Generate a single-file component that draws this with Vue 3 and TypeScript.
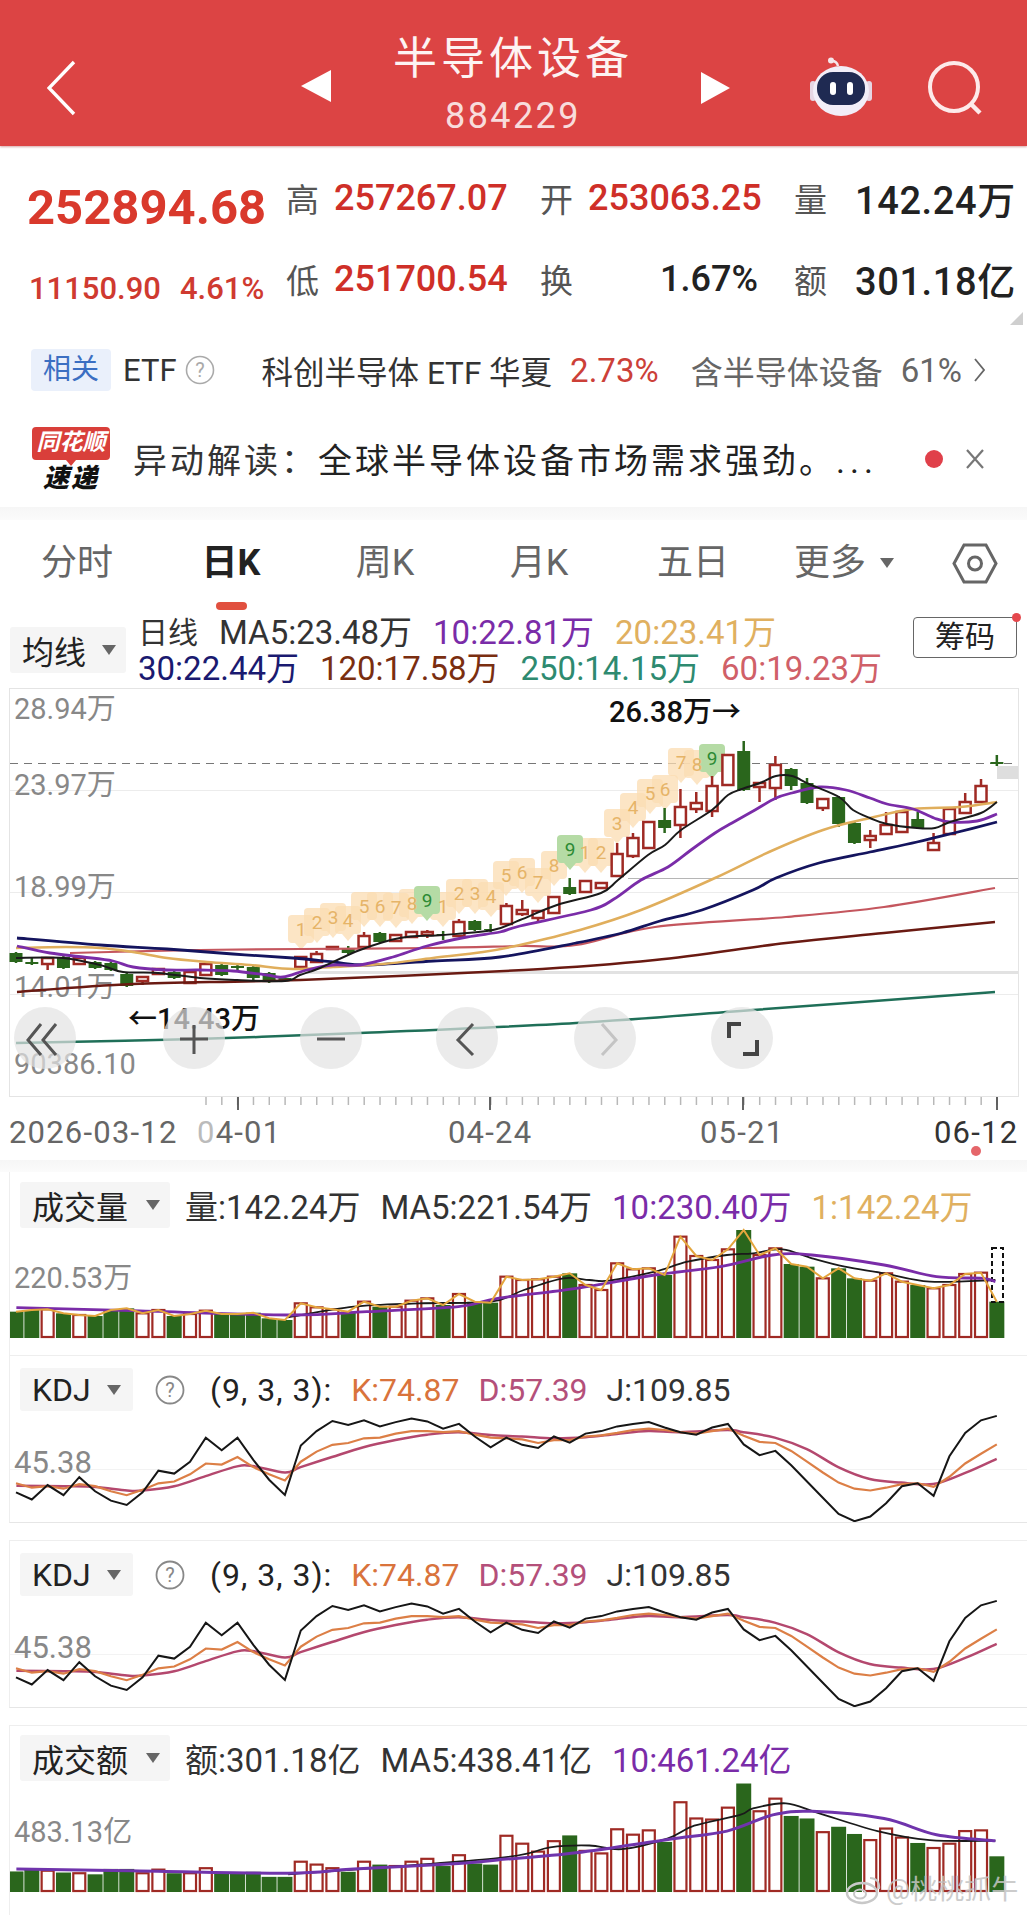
<script setup lang="ts">
type Pt = [number, number]

const STEP = 15.82
const xAt = (i: number) => 16 + STEP * i

// [bodyTop, bodyBottom, wickTop, wickBottom, up]
const candles: [number, number, number, number, number][] = [
  [953, 962, 952, 963, 0], [962, 964, 957, 965, 0], [958, 964, 957, 970, 1], [957, 968, 956, 969, 0],
  [958, 964, 956, 965, 1], [962, 968, 961, 969, 0], [963, 970, 962, 971, 0], [974, 986, 973, 987, 0],
  [977, 981, 977, 985, 1], [969, 974, 968, 975, 1], [972, 978, 971, 979, 0], [972, 983, 971, 984, 1],
  [964, 975, 963, 976, 1], [965, 975, 964, 976, 0], [966, 968, 965, 972, 0], [967, 978, 966, 980, 0],
  [973, 982, 972, 983, 0], [978, 980, 977, 981, 0], [957, 967, 956, 968, 1], [954, 962, 951, 963, 1],
  [947, 949, 946, 950, 1], [949, 953, 946, 954, 0], [936, 947, 932, 948, 1], [933, 942, 932, 943, 0],
  [935, 941, 934, 942, 1], [932, 937, 931, 938, 1], [932, 935, 930, 938, 1], [934, 935, 931, 940, 0],
  [922, 936, 919, 937, 1], [921, 930, 920, 931, 0], [929, 930, 924, 932, 0], [906, 924, 903, 925, 1],
  [910, 914, 900, 916, 1], [911, 918, 910, 922, 1], [897, 913, 896, 914, 1], [887, 894, 878, 895, 0],
  [881, 892, 880, 893, 1], [883, 888, 882, 889, 1], [854, 876, 843, 877, 1], [838, 856, 833, 858, 1],
  [822, 848, 821, 849, 1], [820, 828, 808, 833, 0], [807, 825, 789, 838, 1], [803, 809, 792, 813, 1],
  [786, 811, 776, 817, 1], [755, 785, 754, 786, 1], [751, 790, 741, 791, 0], [783, 787, 782, 802, 1],
  [765, 788, 756, 800, 1], [769, 786, 768, 790, 0], [783, 803, 778, 804, 0], [799, 808, 798, 811, 1],
  [797, 824, 796, 827, 0], [823, 843, 822, 844, 0], [836, 840, 830, 848, 1], [825, 834, 812, 835, 1],
  [812, 832, 811, 833, 1], [819, 828, 812, 829, 0], [843, 850, 833, 851, 1], [809, 834, 808, 835, 1],
  [802, 813, 793, 814, 1], [786, 802, 779, 803, 1], [762, 764, 755, 766, 0]
]

// sequence badges above the candles: [x, y, digit, green]
const badges: [number, number, number, number][] = [
  [301, 929, 1, 0], [317, 922, 2, 0], [333, 917, 3, 0], [348, 920, 4, 0], [364, 906, 5, 0], [380, 906, 6, 0],
  [396, 907, 7, 0], [412, 903, 8, 0], [443, 906, 1, 0], [459, 893, 2, 0], [475, 893, 3, 0], [491, 896, 4, 0],
  [506, 875, 5, 0], [522, 872, 6, 0], [538, 882, 7, 0], [554, 865, 8, 0], [585, 852, 1, 0], [601, 852, 2, 0],
  [617, 823, 3, 0], [633, 807, 4, 0], [650, 793, 5, 0], [665, 789, 6, 0], [681, 762, 7, 0], [697, 764, 8, 0],
  [427, 900, 9, 1], [570, 849, 9, 1], [712, 758, 9, 1]
]

const ma5: Pt[] = [[16, 958], [63, 958], [100, 965], [123, 972], [158, 973], [200, 978], [237, 980], [285, 981], [300, 975], [320, 968], [360, 950], [400, 938], [443, 935], [493, 930], [520, 920], [557, 905], [601, 893], [618, 880], [648, 855], [665, 845], [681, 830], [712, 810], [728, 795], [742, 789], [760, 783], [776, 776], [792, 776], [809, 784], [839, 797], [853, 810], [870, 818], [887, 824], [917, 828], [935, 828], [950, 822], [981, 813], [997, 802]]
const ma10: Pt[] = [[17, 946], [50, 953], [83, 957], [113, 961], [133, 967], [167, 970], [200, 970], [233, 971], [267, 975], [283, 977], [307, 970], [333, 965], [360, 965], [393, 957], [427, 946], [467, 937], [500, 932], [520, 926], [591, 910], [614, 899], [641, 880], [668, 867], [691, 850], [715, 833], [732, 823], [755, 810], [776, 798], [792, 793], [819, 787], [846, 790], [870, 798], [887, 804], [913, 809], [934, 818], [950, 822], [977, 821], [997, 814]]
const ma20: Pt[] = [[16, 948], [66, 947], [100, 948], [133, 952], [167, 958], [207, 962], [250, 965], [293, 969], [333, 967], [383, 964], [433, 958], [483, 952], [520, 945], [580, 930], [641, 910], [715, 878], [769, 852], [823, 830], [870, 818], [913, 809], [960, 807], [997, 802]]
const ma30: Pt[] = [[17, 938], [100, 945], [167, 949], [233, 954], [293, 958], [333, 962], [367, 965], [433, 961], [500, 957], [576, 943], [622, 933], [660, 921], [702, 910], [753, 890], [776, 878], [819, 863], [870, 852], [917, 842], [954, 833], [997, 822]]
const ma60: Pt[] = [[70, 953], [110, 952], [200, 950], [300, 949], [433, 948], [520, 946], [576, 945], [655, 927], [786, 917], [884, 907], [995, 888]]
const ma120: Pt[] = [[17, 992], [133, 984], [300, 980], [524, 970], [655, 960], [786, 943], [884, 933], [995, 922]]
const ma250: Pt[] = [[16, 1043], [196, 1039], [360, 1033], [576, 1023], [753, 1010], [995, 992]]

const maLines = [
  { d: smooth(ma250), color: '#1f6f58', w: 2.5 },
  { d: smooth(ma120), color: '#6a1a12', w: 2.5 },
  { d: smooth(ma60), color: '#c4565e', w: 2.2 },
  { d: smooth(ma30), color: '#14145e', w: 2.8 },
  { d: smooth(ma20), color: '#e0ae5c', w: 2.5 },
  { d: smooth(ma10), color: '#7a2ca8', w: 2.8 },
  { d: smooth(ma5), color: '#1a1a1a', w: 2 }
]

const ticks = Array.from({ length: 51 }, (_, i) => 206 + STEP * i)

const buttons = [45, 194, 331, 467, 605, 742]

// bar tops as read off the enlarged reference crops
const volTops = [1055, 1050, 1048, 1060, 1065, 1068, 1050, 1045, 1060, 1050, 1068, 1062, 1052, 1062, 1062, 1058, 1075, 1080, 1030, 1042, 1048, 1055, 1025, 1040, 1040, 1022, 1015, 1035, 1002, 1025, 1028, 950, 960, 958, 950, 940, 975, 990, 910, 928, 925, 945, 830, 888, 900, 868, 810, 885, 865, 912, 920, 955, 925, 955, 962, 940, 965, 975, 985, 975, 942, 938, 1025].map(y => 960 + y / 3)
const amtTops = [1447, 1440, 1445, 1450, 1452, 1455, 1440, 1440, 1452, 1442, 1452, 1452, 1438, 1450, 1450, 1448, 1462, 1462, 1420, 1428, 1438, 1448, 1420, 1428, 1432, 1420, 1412, 1432, 1402, 1425, 1428, 1348, 1370, 1392, 1363, 1347, 1390, 1397, 1330, 1345, 1333, 1365, 1255, 1300, 1303, 1270, 1203, 1280, 1245, 1293, 1300, 1338, 1323, 1343, 1360, 1328, 1353, 1368, 1382, 1370, 1335, 1333, 1405].map(y => amtY(y))

const volMa10 = volPts([[25, 1043], [200, 1052], [440, 1065], [560, 1055], [700, 1040], [760, 1015], [880, 985], [1000, 945], [1100, 920], [1180, 885], [1240, 885], [1350, 915], [1430, 950], [1500, 955], [1520, 965]])
const volMa5 = volPts([[440, 1072], [540, 1040], [640, 1030], [750, 1025], [800, 990], [860, 955], [900, 960], [930, 962], [1000, 935], [1050, 905], [1110, 885], [1150, 880], [1195, 868], [1240, 895], [1290, 920], [1350, 940], [1420, 965], [1520, 960]])
const volGold = poly(volTops.map((y, i): Pt => [xAt(i), y]))

const amtMa10 = amtPts([[25, 1440], [200, 1445], [440, 1452], [540, 1440], [700, 1425], [760, 1415], [880, 1395], [1020, 1358], [1110, 1335], [1180, 1290], [1240, 1280], [1350, 1300], [1430, 1345], [1520, 1362]])
const amtMa5 = amtPts([[440, 1455], [760, 1410], [840, 1380], [900, 1375], [950, 1385], [1020, 1355], [1060, 1320], [1130, 1290], [1150, 1272], [1200, 1258], [1250, 1285], [1340, 1335], [1420, 1360], [1520, 1362]])

const kdjJ = [395, 415, 375, 403, 353, 392, 418, 430, 395, 335, 343, 310, 243, 278, 243, 305, 360, 402, 265, 225, 197, 208, 195, 212, 200, 190, 198, 218, 205, 240, 270, 243, 263, 272, 240, 257, 232, 225, 212, 205, 200, 215, 228, 235, 215, 205, 262, 292, 280, 320, 365, 410, 455, 475, 462, 425, 378, 370, 405, 295, 230, 195, 183]
const kdjK = [370, 382, 378, 385, 372, 378, 392, 403, 388, 370, 365, 345, 315, 318, 297, 325, 345, 362, 310, 282, 263, 258, 245, 243, 232, 225, 225, 228, 225, 235, 243, 245, 248, 258, 250, 250, 240, 237, 230, 222, 218, 222, 228, 232, 225, 218, 238, 255, 258, 280, 310, 340, 368, 385, 390, 382, 372, 370, 380, 352, 315, 288, 262]
const kdjD: Pt[] = [[25, 377], [98, 378], [146, 380], [194, 390], [218, 390], [266, 378], [314, 350], [362, 323], [386, 322], [435, 340], [459, 325], [507, 297], [555, 270], [604, 250], [652, 235], [700, 228], [749, 236], [797, 240], [845, 245], [894, 242], [942, 233], [990, 225], [1038, 228], [1111, 222], [1135, 228], [1183, 243], [1232, 275], [1280, 325], [1328, 358], [1376, 368], [1425, 372], [1473, 342], [1522, 302]]

const jLine = poly(kdjJ.map((y, i): Pt => [xAt(i), amtY(y)]))
const kLine = poly(kdjK.map((y, i): Pt => [xAt(i), amtY(y)]))
const dLine = smooth(kdjD.map(([x, y]): Pt => [x / 1.527, amtY(y)]))

function amtY(y: number): number {
  return 1350 + y / 2.775
}

function volPts(pts: Pt[]): string {
  return smooth(pts.map(([x, y]): Pt => [x / 1.527, 960 + y / 3]))
}

function amtPts(pts: Pt[]): string {
  return smooth(pts.map(([x, y]): Pt => [x / 1.527, amtY(y)]))
}

function poly(pts: Pt[]): string {
  return pts.map(([x, y], i) => `${i ? 'L' : 'M'}${x.toFixed(1)} ${y.toFixed(1)}`).join(' ')
}

function smooth(pts: Pt[]): string {
  let d = `M${pts[0][0]} ${pts[0][1]}`
  for (let i = 0; i < pts.length - 1; i++) {
    const p0 = pts[Math.max(i - 1, 0)]
    const p1 = pts[i]
    const p2 = pts[i + 1]
    const p3 = pts[Math.min(i + 2, pts.length - 1)]
    const c1x = p1[0] + (p2[0] - p0[0]) / 6
    const c1y = p1[1] + (p2[1] - p0[1]) / 6
    const c2x = p2[0] - (p3[0] - p1[0]) / 6
    const c2y = p2[1] - (p3[1] - p1[1]) / 6
    d += ` C${c1x.toFixed(1)} ${c1y.toFixed(1)} ${c2x.toFixed(1)} ${c2y.toFixed(1)} ${p2[0].toFixed(1)} ${p2[1].toFixed(1)}`
  }
  return d
}
</script>

<template>
  <div class="page">
    <header class="topbar">
      <svg class="back" width="30" height="56" viewBox="0 0 30 56"><path d="M27 2 2 28l25 26" fill="none" stroke="#fff" stroke-width="3.4" /></svg>
      <svg class="tri-l" width="30" height="32" viewBox="0 0 30 32"><path d="M30 0v32L0 16z" fill="#fff" /></svg>
      <div class="title-col">
        <div class="title">半导体设备</div>
        <div class="code">884229</div>
      </div>
      <svg class="tri-r" width="29" height="32" viewBox="0 0 29 32"><path d="M0 0v32l29-16z" fill="#fff" /></svg>
      <svg class="bot" width="64" height="60" viewBox="0 0 64 60">
        <path d="M29 9C28 5 26 4 23 4" fill="none" stroke="#f5e6ea" stroke-width="2.5" />
        <circle cx="22" cy="3.5" r="3" fill="#f5e6ea" />
        <rect x="1" y="24" width="6" height="20" rx="3" fill="#e6d6e4" />
        <rect x="57" y="24" width="6" height="20" rx="3" fill="#e6d6e4" />
        <ellipse cx="32" cy="34" rx="28" ry="25" fill="#f2eef8" />
        <rect x="8" y="15" width="48" height="33" rx="16" fill="#1f2a52" />
        <rect x="21" y="25" width="6" height="13" rx="3" fill="#fff" />
        <rect x="38" y="25" width="6" height="13" rx="3" fill="#fff" />
      </svg>
      <svg class="search" width="58" height="58" viewBox="0 0 58 58">
        <circle cx="27" cy="27" r="24" fill="none" stroke="#fdeaea" stroke-width="4" />
        <path d="M44 44l9 9" stroke="#fdeaea" stroke-width="4.5" />
      </svg>
    </header>

    <section class="quote">
      <div class="q-last">252894.68</div>
      <div class="q-cell"><span class="q-k">高</span><b class="red">257267.07</b></div>
      <div class="q-cell"><span class="q-k">开</span><b class="red">253063.25</b></div>
      <div class="q-cell q-wide"><span class="q-k">量</span><b>142.24万</b></div>
      <div class="q-chg"><span>11150.90</span><span>4.61%</span></div>
      <div class="q-cell"><span class="q-k">低</span><b class="red">251700.54</b></div>
      <div class="q-cell q-turn"><span class="q-k">换</span><b>1.67%</b></div>
      <div class="q-cell q-wide"><span class="q-k">额</span><b>301.18亿</b></div>
      <i class="corner"></i>
    </section>

    <section class="etf">
      <span class="etf-tag">相关</span>
      <span class="etf-name">ETF</span>
      <svg class="etf-help" width="30" height="30" viewBox="0 0 30 30">
        <circle cx="15" cy="15" r="13.5" fill="none" stroke="#aaa" stroke-width="1.6" />
        <text x="15" y="22" text-anchor="middle" font-size="20" fill="#aaa">?</text>
      </svg>
      <span class="etf-fund">科创半导体 ETF 华夏</span>
      <span class="etf-pct">2.73%</span>
      <span class="etf-hold">含半导体设备</span>
      <span class="etf-share">61%</span>
      <svg width="11" height="24" viewBox="0 0 11 24"><path d="M1 1l9 11-9 11" fill="none" stroke="#666" stroke-width="1.8" /></svg>
    </section>

    <section class="news">
      <div class="logo">
        <div class="logo-top">同花顺</div>
        <div class="logo-bottom">速递</div>
      </div>
      <div class="news-text"><span class="news-k">异动解读：</span>全球半导体设备市场需求强劲。<span class="news-more">...</span></div>
      <i class="news-dot"></i>
      <svg width="18" height="20" viewBox="0 0 18 20"><path d="M1 1l16 18M17 1 1 19" stroke="#777" stroke-width="2.2" /></svg>
    </section>
    <div class="band"></div>

    <nav class="tabs">
      <div class="tab">分时</div>
      <div class="tab active">日K<i class="tab-line"></i></div>
      <div class="tab">周K</div>
      <div class="tab">月K</div>
      <div class="tab">五日</div>
      <div class="tab tab-more">更多<i class="caret tab-caret"></i></div>
      <div class="tab hex">
        <svg width="46" height="41" viewBox="0 0 46 41">
          <path d="M12 2h22l10 18.500-10 18.500H12L2 20.500z" fill="none" stroke="#666" stroke-width="3" />
          <circle cx="23" cy="20.500" r="6.500" fill="none" stroke="#666" stroke-width="3" />
        </svg>
      </div>
    </nav>

    <section class="legend">
      <div class="drop drop-ma">均线<i class="caret"></i></div>
      <div class="legend-lines">
        <div class="legend-row">
          <span class="c-dark legend-name">日线</span>
          <span class="c-dark">MA5:23.48万</span>
          <span class="c-purple">10:22.81万</span>
          <span class="c-gold">20:23.41万</span>
        </div>
        <div class="legend-row">
          <span class="c-navy">30:22.44万</span>
          <span class="c-brown">120:17.58万</span>
          <span class="c-teal">250:14.15万</span>
          <span class="c-pink">60:19.23万</span>
        </div>
      </div>
      <div class="chip">筹码<i class="chip-dot"></i></div>
    </section>

    <svg class="chart" width="1027" height="472" viewBox="0 688 1027 472">
      <rect x="9.500" y="688.500" width="1009" height="408" fill="#fff" stroke="#e4e4e4" />
      <path d="M10 790.500h1008M10 892.500h1008M10 994.500h1008" stroke="#ececec" />
      <path d="M628 878.500h390" stroke="#b5b5b5" />
      <rect x="300" y="971" width="718" height="3" fill="#e2e2e2" />
      <path d="M10 763.500h1008" stroke="#777" stroke-dasharray="8 6" />
      <rect x="997" y="766" width="21" height="13" fill="#dedede" />

      <text class="axis" x="14" y="709">28.94万</text>
      <text class="axis" x="14" y="785">23.97万</text>
      <text class="axis" x="14" y="887">18.99万</text>
      <text class="axis" x="14" y="987">14.01万</text>
      <text class="axis" x="14" y="1064">90386.10</text>
      <text class="peak" x="609" y="712">26.38万→</text>
      <text class="peak" x="128" y="1019">←14.43万</text>

      <g v-for="(b, i) in badges" :key="'b' + i">
        <rect :x="b[0] - 13" :y="b[1] - 14" width="26" height="28" rx="4" :fill="b[3] ? '#b5dba5' : '#fbdcb2'" :opacity="b[3] ? 1 : 0.75" />
        <path :d="`M${b[0] - 6} ${b[1] + 14}h12l-6 7z`" :fill="b[3] ? '#b5dba5' : '#fbdcb2'" :opacity="b[3] ? 1 : 0.75" />
      </g>
      <text v-for="(b, i) in badges" :key="'n' + i" class="digit" :x="b[0]" :y="b[1]" :fill="b[3] ? '#2c8a34' : '#e6b468'">{{ b[2] }}</text>

      <g v-for="(c, i) in candles" :key="'c' + i">
        <line :x1="xAt(i)" :x2="xAt(i)" :y1="c[2]" :y2="c[3]" :stroke="c[4] ? '#9f2a24' : '#2a661c'" stroke-width="2.500" />
        <rect v-if="c[4]" :x="xAt(i) - 5.5" :y="c[0]" width="11" :height="c[1] - c[0]" fill="#fff" stroke="#9f2a24" stroke-width="2.500" />
        <rect v-else :x="xAt(i) - 6.5" :y="c[0]" width="13" :height="c[1] - c[0]" fill="#2a661c" />
      </g>

      <path v-for="l in maLines" :key="l.color" :d="l.d" fill="none" :stroke="l.color" :stroke-width="l.w" />

      <circle v-for="x in buttons" :key="x" :cx="x" cy="1038" r="31" fill="#e2e2e2" fill-opacity="0.7" />
      <path d="M41 1024 28 1040l13 15M56 1024 43 1040l13 15" fill="none" stroke="#555" stroke-width="3" />
      <path d="M180 1039h28M194 1025v29" stroke="#555" stroke-width="3" />
      <path d="M317 1039h28" stroke="#555" stroke-width="3" />
      <path d="M473 1024l-15 16 15 15" fill="none" stroke="#555" stroke-width="3" />
      <path d="M602 1024l14 16-14 15" fill="none" stroke="#c4c4c4" stroke-width="3" />
      <path d="M729 1038v-14h12M757 1040v14h-14" fill="none" stroke="#444" stroke-width="4" />

      <line v-for="x in ticks" :key="x" :x1="x" :x2="x" y1="1097" y2="1105" stroke="#b8b8b8" stroke-width="1.500" />
      <path d="M238 1097v13M490 1097v13M743 1097v13M997 1097v13" stroke="#555" stroke-width="1.800" />
      <text class="date" x="9" y="1132">2026-03-12</text>
      <text class="date" x="197" y="1132"><tspan fill="#bbb">0</tspan>4-01</text>
      <text class="date" x="448" y="1132">04-24</text>
      <text class="date" x="700" y="1132">05-21</text>
      <text class="date date-now" x="934" y="1132">06-12</text>
      <circle cx="976" cy="1151" r="5" fill="#e5666a" />
    </svg>
    <div class="band band-2"></div>

    <section class="panel panel-vol">
      <div class="panel-head head-vol">
        <div class="drop drop-wide">成交量<i class="caret"></i></div>
        <span class="c-dark">量:142.24万</span>
        <span class="c-dark">MA5:221.54万</span>
        <span class="c-purple">10:230.40万</span>
        <span class="c-gold">1:142.24万</span>
      </div>
      <svg class="chart" width="1017" height="127" viewBox="10 1228 1017 127">
        <text class="axis" x="14" y="1278">220.53万</text>
        <g v-for="(y, i) in volTops" :key="i">
          <rect v-if="candles[i][4]" :x="xAt(i) - 6" :y="y" width="12" :height="1337 - y" fill="#fff" stroke="#9f2a24" stroke-width="2.200" />
          <rect v-else :x="xAt(i) - 7.5" :y="y" width="15" :height="1338 - y" fill="#2a661c" />
        </g>
        <rect x="992" y="1248" width="11" height="54" fill="none" stroke="#111" stroke-width="2" stroke-dasharray="5 3" />
        <path :d="volMa5" fill="none" stroke="#1a1a1a" stroke-width="1.800" />
        <path :d="volMa10" fill="none" stroke="#7a2ca8" stroke-width="2.800" />
        <path :d="volGold" fill="none" stroke="#e4a63e" stroke-width="2" />
      </svg>
    </section>

    <section v-for="n in 2" :key="n" class="panel panel-kdj">
      <div class="panel-head head-kdj">
        <div class="drop drop-kdj">KDJ<i class="caret"></i></div>
        <svg class="kdj-help" width="30" height="30" viewBox="0 0 30 30">
          <circle cx="15" cy="15" r="13.500" fill="none" stroke="#888" stroke-width="1.800" />
          <text x="15" y="22" text-anchor="middle" font-size="20" fill="#888">?</text>
        </svg>
        <span class="kdj-param">(9, 3, 3):</span>
        <span class="c-k">K:74.87</span>
        <span class="c-d">D:57.39</span>
        <span class="c-dark">J:109.85</span>
      </div>
      <svg class="chart" width="1017" height="111" viewBox="10 1411 1017 111">
        <path d="M10 1469.500h1017" stroke="#f3f3f3" />
        <text class="axis axis-kdj" x="14" y="1462">45.38</text>
        <path :d="dLine" fill="none" stroke="#b4486e" stroke-width="2.500" />
        <path :d="kLine" fill="none" stroke="#dc7f46" stroke-width="2.200" />
        <path :d="jLine" fill="none" stroke="#161616" stroke-width="2" />
      </svg>
    </section>

    <section class="panel panel-amt">
      <div class="panel-head head-amt">
        <div class="drop drop-wide">成交额<i class="caret"></i></div>
        <span class="c-dark">额:301.18亿</span>
        <span class="c-dark">MA5:438.41亿</span>
        <span class="c-purple">10:461.24亿</span>
      </div>
      <svg class="chart" width="1017" height="135" viewBox="10 1780 1017 135">
        <text class="axis" x="14" y="1832">483.13亿</text>
        <g v-for="(y, i) in amtTops" :key="i">
          <rect v-if="candles[i][4]" :x="xAt(i) - 6" :y="y" width="12" :height="1891 - y" fill="#fff" stroke="#9f2a24" stroke-width="2.200" />
          <rect v-else :x="xAt(i) - 7.500" :y="y" width="15" :height="1892 - y" fill="#2a661c" />
        </g>
        <path :d="amtMa5" fill="none" stroke="#1a1a1a" stroke-width="1.800" />
        <path :d="amtMa10" fill="none" stroke="#6f34ac" stroke-width="3" />
        <ellipse cx="862" cy="1893" rx="15" ry="10" fill="none" stroke="#c8c8c8" stroke-width="2.500" />
        <ellipse cx="860" cy="1894" rx="6" ry="4.500" fill="none" stroke="#c8c8c8" stroke-width="2" />
        <path d="M870 1878c6 0 10 4 9 11" fill="none" stroke="#c8c8c8" stroke-width="2" />
        <text class="mark" x="886" y="1890">@桃桃抓牛</text>
      </svg>
    </section>
  </div>
</template>

<style>
html, body {
  margin: 0;
  background: #fff;
}
</style>

<style scoped>
.page {
  width: 1027px;
  height: 1915px;
  overflow: hidden;
  background: #fff;
  color: #222;
  font-family: Roboto, "Noto Sans CJK SC", sans-serif;
}
.topbar {
  display: flex;
  align-items: flex-start;
  height: 146px;
  background: #dc4444;
  box-shadow: 0 1px 2px rgba(150, 40, 40, 0.4);
  position: relative;
}
.back {
  margin: 60px 0 0 47px;
}
.tri-l {
  margin: 70px 0 0 224px;
}
.title-col {
  width: 370px;
  text-align: center;
  padding-right: 6px;
  box-sizing: border-box;
}
.title {
  margin-top: 34px;
  height: 50px;
  line-height: 50px;
  font-size: 44px;
  letter-spacing: 4px;
  color: #fdf3f3;
}
.code {
  margin-top: 15px;
  height: 34px;
  line-height: 34px;
  font-size: 36px;
  letter-spacing: 2.400px;
  color: #f8dcdc;
}
.tri-r {
  margin: 72px 0 0 0;
}
.bot {
  margin: 57px 0 0 79px;
}
.search {
  margin: 60px 0 0 54px;
}

.quote {
  position: relative;
  display: grid;
  grid-template-columns: 259px 254px 254px 233px;
  grid-template-rows: 81px 81px;
  height: 184px;
  padding: 11px 0 0 27px;
  box-sizing: border-box;
  align-items: center;
}
.q-last {
  padding-top: 20px;
  font-size: 49px;
  font-weight: 700;
  color: #d9392c;
  white-space: nowrap;
}
.q-chg {
  display: flex;
  gap: 19px;
  padding: 20px 0 0 2px;
  font-size: 31px;
  font-weight: 500;
  color: #cf3a30;
  white-space: nowrap;
}
.q-cell {
  display: flex;
  align-items: center;
  white-space: nowrap;
  font-size: 36px;
}
.q-cell b {
  font-weight: 500;
  color: #222;
}
.q-cell b.red {
  color: #cf2f28;
}
.q-k {
  width: 48px;
  font-size: 33px;
  color: #555;
}
.q-wide .q-k {
  width: 61px;
}
.q-wide b {
  font-size: 38px;
  letter-spacing: 0.600px;
}
.q-turn {
  width: 218px;
  justify-content: space-between;
}
.corner {
  position: absolute;
  right: 4px;
  bottom: 5px;
  border-style: solid;
  border-width: 0 0 13px 13px;
  border-color: transparent transparent #cfcfcf transparent;
}

.etf {
  display: flex;
  align-items: center;
  height: 80px;
  padding-left: 31px;
  white-space: nowrap;
  font-size: 30px;
}
.etf-tag {
  width: 80px;
  height: 42px;
  line-height: 42px;
  text-align: center;
  font-size: 28px;
  background: #eaf0fb;
  border-radius: 4px;
  color: #3b6fc2;
}
.etf-name {
  margin-left: 12px;
  color: #333;
  font-size: 31px;
}
.etf-help {
  margin-left: 8px;
}
.etf-fund {
  margin-left: 47px;
  color: #333;
  font-size: 31.500px;
}
.etf-pct {
  margin-left: 18px;
  color: #cc4038;
  font-size: 33px;
}
.etf-hold {
  margin-left: 32px;
  color: #666;
  font-size: 32px;
}
.etf-share {
  margin: 0 12px 0 18px;
  color: #666;
  font-size: 33px;
}

.news {
  display: flex;
  align-items: center;
  height: 97px;
  padding-left: 32px;
  white-space: nowrap;
}
.logo {
  width: 78px;
  text-align: center;
}
.logo-top {
  position: relative;
  height: 33px;
  line-height: 32px;
  background: #d93f3a;
  border-radius: 4px;
  color: #fff;
  font-size: 23px;
  font-weight: 700;
  font-style: italic;
}
.logo-top::after {
  content: '';
  position: absolute;
  left: 34px;
  bottom: -6px;
  border-style: solid;
  border-width: 6px 5px 0;
  border-color: #d93f3a transparent transparent;
}
.logo-bottom {
  margin-top: 6px;
  height: 25px;
  line-height: 25px;
  color: #111;
  font-size: 26px;
  font-weight: 900;
  font-style: italic;
  letter-spacing: 2px;
}
.news-text {
  margin-left: 23px;
  width: 794px;
  font-size: 34px;
  letter-spacing: 3px;
  color: #222;
}
.news-k {
  color: #333;
}
.news-more {
  letter-spacing: 5px;
}
.news-dot {
  width: 18px;
  height: 18px;
  border-radius: 50%;
  background: #e0404a;
  margin-right: 23px;
  margin-left: -2px;
}
.band {
  height: 13px;
  background: linear-gradient(#f6f6f6, #fbfbfb);
}
.band-2 {
  height: 12px;
}

.tabs {
  display: grid;
  grid-template-columns: repeat(6, 154px) 102px;
  height: 90px;
}
.tab {
  display: flex;
  flex-direction: column;
  align-items: center;
  padding-top: 4px;
  height: 78px;
  line-height: 78px;
  font-size: 36px;
  color: #666;
  position: relative;
}
.tab.active {
  color: #222;
  font-weight: 700;
}
.tab-line {
  display: block;
  flex: none;
  width: 31px;
  height: 8px;
  border-radius: 4px;
  background: #e1503f;
}
.tab.hex {
  justify-content: center;
}
.tab-more {
  padding-right: 34px;
}
.tab-caret {
  position: absolute;
  right: 30px;
  top: 38px;
}
.caret {
  display: inline-block;
  border-style: solid;
  border-width: 10px 7px 0;
  border-color: #666 transparent transparent;
}

.legend {
  display: flex;
  align-items: flex-start;
  height: 78px;
  padding-left: 10px;
  white-space: nowrap;
  font-size: 33px;
}
.drop {
  display: flex;
  align-items: center;
  justify-content: space-between;
  box-sizing: border-box;
  background: #f5f5f5;
  color: #222;
  border-radius: 3px;
  font-size: 32px;
}
.drop-ma {
  width: 116px;
  height: 46px;
  padding: 0 10px 0 12px;
  margin-top: 17px;
}
.legend-lines {
  margin: 5px 0 0 12px;
}
.legend-row {
  display: flex;
  gap: 21px;
  height: 36px;
  line-height: 36px;
}
.legend-name {
  font-size: 30px;
}
.chip {
  position: relative;
  box-sizing: border-box;
  width: 104px;
  height: 41px;
  line-height: 38px;
  margin: 7px 10px 0 auto;
  text-align: center;
  font-size: 30px;
  border: 1px solid #666;
  border-radius: 4px;
}
.chip-dot {
  position: absolute;
  top: -5px;
  right: -5px;
  width: 9px;
  height: 9px;
  border-radius: 50%;
  background: #e5484d;
}
.c-dark { color: #333; }
.c-purple { color: #7a2ca8; }
.c-gold { color: #e0b060; }
.c-navy { color: #1a1a70; }
.c-brown { color: #7a2e10; }
.c-teal { color: #2e8a70; }
.c-pink { color: #d06068; }
.c-k { color: #d9733c; }
.c-d { color: #b4507a; }

.chart {
  display: block;
}
.axis, .peak, .date, .digit, .mark {
  font-family: Roboto, "Noto Sans CJK SC", sans-serif;
  dominant-baseline: central;
}
.axis {
  font-size: 29px;
  fill: #888;
}
.axis-kdj {
  font-size: 31px;
}
.peak {
  font-size: 29px;
  font-weight: 500;
  fill: #111;
}
.date {
  font-size: 31px;
  letter-spacing: 1.200px;
  fill: #666;
}
.date-now {
  fill: #333;
}
.digit {
  font-size: 19px;
  text-anchor: middle;
}
.mark {
  font-size: 27px;
  fill: #c4c4c4;
  opacity: 0.85;
}

.panel {
  margin-left: 9px;
  border-left: 1px solid #eee;
  box-sizing: border-box;
  font-size: 33px;
  white-space: nowrap;
}
.panel-head {
  display: flex;
  align-items: center;
}
.panel-vol {
  height: 183px;
  padding-top: 10px;
}
.head-vol {
  height: 46px;
  padding-left: 10px;
}
.head-vol .drop-wide {
  margin-right: 15px;
}
.head-vol span {
  margin-right: 20px;
}
.drop-wide {
  width: 150px;
  height: 46px;
  padding: 0 10px 0 12px;
}
.panel-kdj {
  height: 168px;
  margin-bottom: 17px;
  border-top: 1px solid #eee;
  border-bottom: 1px solid #e6e6e6;
  padding-top: 12px;
  font-size: 32px;
}
.head-kdj {
  height: 43px;
  padding-left: 10px;
}
.drop-kdj {
  width: 113px;
  height: 43px;
  padding: 0 12px;
}
.kdj-help {
  margin: 0 25px 0 22px;
}
.kdj-param {
  margin-right: 19px;
  color: #222;
  letter-spacing: 1px;
}
.head-kdj span {
  margin-right: 19px;
}
.panel-amt {
  height: 190px;
  border-top: 1px solid #eee;
  padding-top: 9px;
}
.head-amt {
  height: 45px;
  padding-left: 10px;
}
.head-amt .drop-wide {
  margin-right: 15px;
}
.head-amt span {
  margin-right: 20px;
}
</style>
